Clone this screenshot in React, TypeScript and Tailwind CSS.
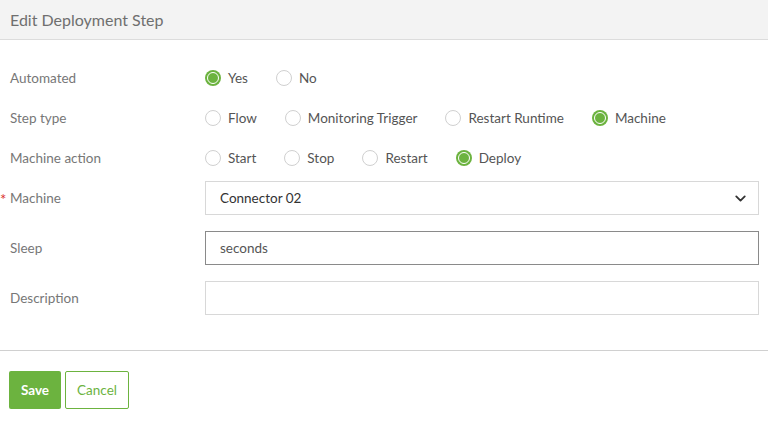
import React from "react";
import { ChevronDown } from "lucide-react";

const font = { fontFamily: "Lato, 'Open Sans', sans-serif" };

function Radio({ label, checked }: { label: string; checked?: boolean }) {
  return (
    <div className="flex items-center gap-[7px]">
      {checked ? (
        <span className="w-4 h-4 rounded-full bg-[#6cb33f] flex items-center justify-center">
          <span className="w-3 h-3 rounded-full border border-white bg-[#6cb33f]" />
        </span>
      ) : (
        <span className="w-4 h-4 rounded-full border-[1.5px] border-[#d0d0d0] bg-white" />
      )}
      <span className="text-[13.5px] text-[#555]">{label}</span>
    </div>
  );
}

function Label({ text, required }: { text: string; required?: boolean }) {
  return (
    <div className="w-[205px] shrink-0 flex items-center text-[13.5px] text-[#777]">
      <span className="w-[10px] text-[#d9302c] text-[15px] leading-none pt-[3px]">{required ? "*" : ""}</span>
      <span>{text}</span>
    </div>
  );
}

export default function App() {
  return (
    <div className="w-[768px] h-[422px] bg-white" style={font}>
      <div className="h-10 bg-[#f3f3f3] border-b border-[#dcdcdc] flex items-center px-[10px]">
        <span className="text-[16px] text-[#6f6f6f]">Edit Deployment Step</span>
      </div>
      <div className="pt-[18px] pr-[9px]">
        <div className="flex h-10 items-center">
          <Label text="Automated" />
          <div className="flex gap-7">
            <Radio label="Yes" checked />
            <Radio label="No" />
          </div>
        </div>
        <div className="flex h-10 items-center">
          <Label text="Step type" />
          <div className="flex gap-7">
            <Radio label="Flow" />
            <Radio label="Monitoring Trigger" />
            <Radio label="Restart Runtime" />
            <Radio label="Machine" checked />
          </div>
        </div>
        <div className="flex h-10 items-center">
          <Label text="Machine action" />
          <div className="flex gap-7">
            <Radio label="Start" />
            <Radio label="Stop" />
            <Radio label="Restart" />
            <Radio label="Deploy" checked />
          </div>
        </div>
        <div className="flex flex-col gap-4 mt-[3px]">
          <div className="flex items-center">
            <Label text="Machine" required />
            <div className="flex-1 h-[34px] border border-[#d8d8d8] flex items-center justify-between pl-[14px] pr-[9px]">
              <span className="text-[13.5px] text-[#333]">Connector 02</span>
              <ChevronDown size={17} strokeWidth={2.6} className="text-[#333]" />
            </div>
          </div>
          <div className="flex items-center">
            <Label text="Sleep" />
            <div className="flex-1 h-[34px] border border-[#8a8a8a] flex items-center pl-[14px]">
              <span className="text-[13.5px] text-[#555]">seconds</span>
            </div>
          </div>
          <div className="flex items-center">
            <Label text="Description" />
            <div className="flex-1 h-[34px] border border-[#d8d8d8]" />
          </div>
        </div>
      </div>
      <div className="mt-[35px] border-t border-[#d0d0d0]" />
      <div className="flex gap-1 pl-[9px] pt-5">
        <button className="h-[38px] w-[52px] rounded-[2px] bg-[#6cb33f] text-white text-[13.5px] font-bold">Save</button>
        <button className="h-[38px] w-[64px] rounded-[2px] border border-[#6cb33f] bg-white text-[#6cb33f] text-[13.5px]">Cancel</button>
      </div>
    </div>
  );
}
